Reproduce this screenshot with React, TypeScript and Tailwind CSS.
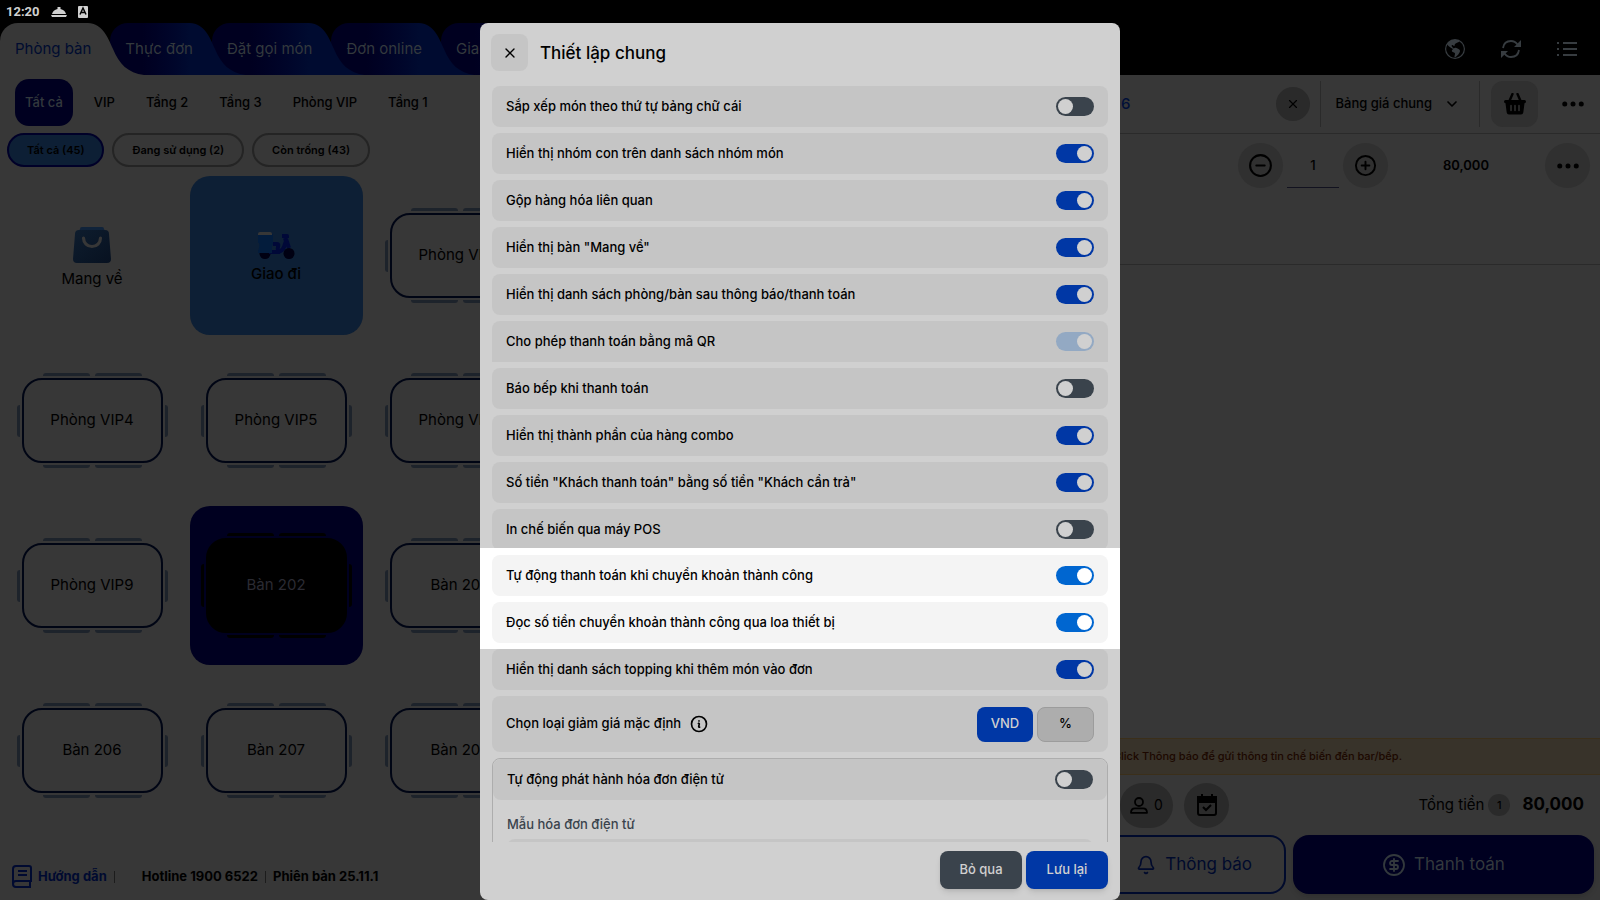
import { BsGlobeAmericas } from "react-icons/bs"
import { HiOutlineInformationCircle } from "react-icons/hi2"
import { Bell, ChevronDown, CircleDollarSign, CircleMinus, CirclePlus, X } from "lucide-react"

const tabs = ["Phòng bàn", "Thực đơn", "Đặt gọi món", "Đơn online", "Giao hàng"]
const areas = ["Tất cả", "VIP", "Tầng 2", "Tầng 3", "Phòng VIP", "Tầng 1"]
const filters = ["Tất cả (45)", "Đang sử dụng (2)", "Còn trống (43)"]

const tables = [
  ["Phòng VIP3"],
  ["Phòng VIP4", "Phòng VIP5", "Phòng VIP6"],
  ["Phòng VIP9", "Bàn 202", "Bàn 203"],
  ["Bàn 206", "Bàn 207", "Bàn 208"],
]

type Setting = { label: string; on: boolean; disabled?: boolean }

const settings: Setting[] = [
  { label: "Sắp xếp món theo thứ tự bảng chữ cái", on: false },
  { label: "Hiển thị nhóm con trên danh sách nhóm món", on: true },
  { label: "Gộp hàng hóa liên quan", on: true },
  { label: 'Hiển thị bàn "Mang về"', on: true },
  { label: "Hiển thị danh sách phòng/bàn sau thông báo/thanh toán", on: true },
  { label: "Cho phép thanh toán bằng mã QR", on: true, disabled: true },
  { label: "Báo bếp khi thanh toán", on: false },
  { label: "Hiển thị thành phần của hàng combo", on: true },
  { label: 'Số tiền "Khách thanh toán" bằng số tiền "Khách cần trả"', on: true },
  { label: "In chế biến qua máy POS", on: false },
]

const highlighted: Setting[] = [
  { label: "Tự động thanh toán khi chuyển khoản thành công", on: true },
  { label: "Đọc số tiền chuyển khoản thành công qua loa thiết bị", on: true },
]

function Toggle({ on, disabled, bright }: { on: boolean; disabled?: boolean; bright?: boolean }) {
  let track = "bg-[#3a434c] checked:bg-[#0037a5]"
  if (disabled) track = "bg-[#93a9c3]"
  if (bright) track = "bg-[#0066d0]"
  return (
    <span className="relative flex shrink-0">
      <input
        type="checkbox"
        defaultChecked={on}
        disabled={disabled}
        className={`peer h-[19px] w-[38px] appearance-none rounded-full ${track}`}
      />
      <span
        className={`pointer-events-none absolute left-[2px] top-[2px] h-[15px] w-[15px] rounded-full peer-checked:left-[21px] ${bright ? "bg-white" : "bg-[#d0d0d0]"}`}
      />
    </span>
  )
}

function SettingRow({ item, bright }: { item: Setting; bright?: boolean }) {
  return (
    <label
      className={`flex h-[41px] items-center justify-between px-[14px] ${item.disabled ? "rounded-t-lg" : "rounded-lg"} ${bright ? "bg-[#f4f4f4]" : "bg-[#c5c5c5]"}`}
    >
      <span>{item.label}</span>
      <Toggle on={item.on} disabled={item.disabled} bright={bright} />
    </label>
  )
}

function Tab({ label, active }: { label: string; active: boolean }) {
  return (
    <button
      className={`relative flex h-[52px] items-center pl-[15px] pr-[19px] ${active ? "text-[#000c30]" : "text-[#33393d]"}`}
    >
      <span
        className={`absolute inset-y-0 left-0 right-[22px] rounded-tl-[18px] ${active ? "bg-[#373737]" : "bg-linear-to-r from-[#000020] from-40% to-[#000b30]"}`}
      />
      <svg
        className={`absolute -right-[34px] top-0 ${active ? "text-[#373737]" : "text-[#000b30]"}`}
        width="56"
        height="52"
        viewBox="0 0 56 52"
        fill="currentColor"
      >
        <path d="M0 0C14 1 19 12 25 26C31 41 40 50 56 52H0Z" />
      </svg>
      <span className="relative whitespace-nowrap">{label}</span>
    </button>
  )
}

function TableCard({ name, selected }: { name: string; selected?: boolean }) {
  const bar = selected ? "bg-black" : "bg-[#1d232b]"
  return (
    <button
      className={`mx-auto flex h-full w-[173px] flex-col items-center justify-center gap-[2px] rounded-[20px] ${selected ? "bg-[#000020] text-[#2b2b33]" : "text-black"}`}
    >
      <span className="flex gap-[5px]">
        <span className={`h-[3px] w-[47px] rounded-t-full ${bar}`} />
        <span className={`h-[3px] w-[47px] rounded-t-full ${bar}`} />
      </span>
      <span className="flex items-center gap-[2px]">
        <span className={`w-[3px] rounded-l-full ${selected ? "h-[43px]" : "h-8"} ${bar}`} />
        <span
          className={`flex w-[141px] items-center justify-center rounded-[20px] border-2 ${selected ? "h-[95px] border-black bg-black" : "h-[85px] border-[#000514]"}`}
        >
          {name}
        </span>
        <span className={`w-[3px] rounded-r-full ${selected ? "h-[43px]" : "h-8"} ${bar}`} />
      </span>
      <span className="flex gap-[5px]">
        <span className={`h-[3px] w-[47px] rounded-b-full ${bar}`} />
        <span className={`h-[3px] w-[47px] rounded-b-full ${bar}`} />
      </span>
    </button>
  )
}

function BagIcon() {
  return (
    <svg width="40" height="38" viewBox="0 0 40 38">
      <defs>
        <linearGradient id="bag" x1="0" y1="0" x2="1" y2="1">
          <stop offset="0" stopColor="#0e1d2e" />
          <stop offset="1" stopColor="#071120" />
        </linearGradient>
      </defs>
      <path d="M10 1h20q2 0 2 2l2 4H6l2-4q0-2 2-2Z" fill="#10233a" />
      <path d="M7 4h26q4 0 4 4l2 25q0 4-4 4H5q-4 0-4-4L3 8q0-4 4-4Z" fill="url(#bag)" />
      <path d="M11.500 12a8.500 8.500 0 0 0 17 0" fill="none" stroke="#373737" strokeWidth="3.200" strokeLinecap="round" />
    </svg>
  )
}

function ScooterIcon() {
  return (
    <svg width="38" height="28" viewBox="0 0 38 28">
      <circle cx="8" cy="22.500" r="5.500" fill="#000012" />
      <path
        d="M16 13h4q2 0 1 3-1 4 2 4 2 0 4-4l2-6-1-3M25 5h5v2M29 8l3 9"
        fill="none"
        stroke="#000838"
        strokeWidth="4"
        strokeLinejoin="round"
      />
      <path d="M12 19h13l-2 4H12Z" fill="#000838" />
      <path d="M1 3h15v9l-1 4v6H1v-2q2-5 1-8H1Z" fill="#031c3c" />
      <path d="M1 3q0-2 2-2h10q2 0 2 2v1H1Z" fill="#373737" />
      <circle cx="32" cy="22.500" r="5.500" fill="#000012" />
    </svg>
  )
}

function BasketIcon() {
  return (
    <svg width="22" height="22" viewBox="0 0 22 22">
      <path d="M5 9 8.500 1M17 9 13.500 1" stroke="currentColor" strokeWidth="2.400" strokeLinecap="round" />
      <path
        d="M1.500 7h19q1.500 0 1.500 1.500T20.500 10.200L19.300 19.500q-.3 2-2.300 2H5q-2 0-2.300-2L1.500 10.200Q0 10 0 8.500T1.500 7Z"
        fill="currentColor"
      />
      <path d="M7 12.500v5M11 12.500v5M15 12.500v5" stroke="#303030" strokeWidth="1.500" strokeLinecap="round" />
    </svg>
  )
}

function Dots() {
  return (
    <svg width="22" height="6" viewBox="0 0 22 6" fill="currentColor">
      <circle cx="2.750" cy="3" r="2.500" />
      <circle cx="11" cy="3" r="2.500" />
      <circle cx="19.250" cy="3" r="2.500" />
    </svg>
  )
}

function TablesPanel() {
  return (
    <section className="flex w-[57.5%] shrink-0 flex-col text-black">
      <nav className="flex items-center gap-[11px] px-[15px] pt-[4px] text-[13px] font-medium">
        {areas.map((area, i) => (
          <button
            key={area}
            className={`h-[47px] whitespace-nowrap rounded-[14px] px-[10px] ${i === 0 ? "bg-[#000020] text-[#33393d]" : ""}`}
          >
            {area}
          </button>
        ))}
      </nav>
      <div className="flex gap-2 px-[7px] pt-[7px] text-[11px] font-semibold">
        {filters.map((filter, i) => (
          <button
            key={filter}
            className={`h-[34px] whitespace-nowrap rounded-full border-2 px-[18px] ${i === 0 ? "border-[#000028] bg-[#0d1f35]" : "border-[#242424]"}`}
          >
            {filter}
          </button>
        ))}
      </div>
      <div className="mt-[9px] grid auto-rows-[159px] grid-cols-5 gap-y-[6px]">
        <button className="mx-auto flex w-[173px] flex-col items-center justify-center gap-1 pt-[6px]">
          <BagIcon />
          Mang về
        </button>
        <button className="mx-auto flex w-[173px] flex-col items-center justify-center gap-1 rounded-[20px] bg-[#0d1f35] pt-[6px] font-medium">
          <ScooterIcon />
          Giao đi
        </button>
        {tables.map((row, r) =>
          row.map((name, i) => (
            <div key={name} className={i === row.length - 1 ? "col-span-3 grid grid-cols-3" : ""}>
              <TableCard name={name} selected={r === 2 && i === 1} />
            </div>
          )),
        )}
      </div>
      <footer className="mt-auto flex h-[47px] items-center px-3 text-[13px] font-bold">
        <a href="#guide" className="flex items-center gap-[6px] text-[#000a30]">
          <svg width="20" height="23" viewBox="0 0 20 23" fill="none" stroke="currentColor" strokeWidth="2">
            <path d="M19 17V3q0-2-2-2H4Q1 1 1 4v15q0 3 3 3h15M1 19q0-3 3-3h15M18 17v5M6 6h9M6 10h9" />
          </svg>
          Hướng dẫn
        </a>
        <span className="ml-[7px] h-3 w-px bg-[#1c1c1c]" />
        <span className="ml-[27px]">Hotline 1900 6522</span>
        <span className="mx-[7px] h-3 w-px bg-[#1c1c1c]" />
        <span>Phiên bản 25.11.1</span>
      </footer>
    </section>
  )
}

function OrderPanel() {
  return (
    <section className="flex min-w-0 flex-1 flex-col text-black">
      <div className="flex h-[59px] items-center border-b border-[#2a2a2a]">
        <span className="flex-1 pl-[201px] text-[15px] font-medium text-[#000f38]">6</span>
        <button aria-label="Xóa" className="mr-[10px] flex h-[34px] w-[34px] items-center justify-center rounded-full bg-[#2a2a2a]">
          <X size={14} />
        </button>
        <button className="flex h-[46px] items-center gap-[12px] border-x border-[#2a2a2a] pl-[15px] pr-[19px] text-[13px] font-medium">
          Bảng giá chung
          <ChevronDown size={16} strokeWidth={2.500} />
        </button>
        <button aria-label="Giỏ hàng" className="ml-[11px] flex h-[46px] w-[47px] items-center justify-center rounded-xl bg-[#303030]">
          <BasketIcon />
        </button>
        <button aria-label="Thêm" className="ml-6 mr-4">
          <Dots />
        </button>
      </div>
      <div className="flex h-[131px] items-start justify-end border-b border-[#2a2a2a] pr-[10px] pt-[9px] text-[13px] font-semibold">
        <button aria-label="Giảm" className="flex h-[45px] w-[45px] items-center justify-center rounded-full bg-[#303030]">
          <CircleMinus size={25} />
        </button>
        <input
          aria-label="Số lượng"
          defaultValue="1"
          className="mx-1 h-[45px] w-[52px] border-b border-[#12121f] text-center font-medium"
        />
        <button aria-label="Tăng" className="flex h-[45px] w-[45px] items-center justify-center rounded-full bg-[#303030]">
          <CirclePlus size={23} />
        </button>
        <span className="w-[157px] pr-[56px] text-right leading-[45px]">80,000</span>
        <button aria-label="Tùy chọn" className="flex h-[45px] w-[45px] items-center justify-center rounded-full bg-[#303030]">
          <Dots />
        </button>
      </div>
      <p className="mt-auto h-[37px] border-y border-[#3b2f1a] bg-[#38332a] pl-[193px] text-[11px] font-medium leading-[35px] text-[#1c0800]">
        Click Thông báo để gửi thông tin chế biến đến bar/bếp.
      </p>
      <div className="flex h-[60px] items-center pl-[200px] pr-[16px]">
        <button className="flex h-[45px] w-[53px] items-center justify-center gap-[6px] rounded-full bg-[#2a2a2a] text-sm">
          <svg width="18" height="17" viewBox="0 0 18 17" fill="none" stroke="currentColor" strokeWidth="1.800">
            <circle cx="9" cy="5" r="4" />
            <path d="M1 15.800q0-4.500 4-4.500h8q4 0 4 4.500Z" strokeLinejoin="round" />
          </svg>
          0
        </button>
        <button aria-label="Đặt bàn" className="ml-[11px] flex h-[45px] w-[45px] items-center justify-center rounded-full bg-[#2a2a2a]">
          <svg width="22" height="24" viewBox="0 0 22 24" fill="none" stroke="currentColor" strokeWidth="2">
            <rect x="2" y="4" width="18" height="18" rx="2" />
            <path d="M2 4h18v5H2z" fill="currentColor" />
            <path d="M6 1v4M16 1v4M7 14l3 3 5-5" />
          </svg>
        </button>
        <span className="ml-auto text-[15px]">Tổng tiền</span>
        <span className="ml-1 flex h-[22px] w-[22px] items-center justify-center rounded-full bg-[#2a2a2a] text-[11px] font-medium">1</span>
        <span className="ml-3 text-[17px] font-bold">80,000</span>
      </div>
      <div className="flex gap-[7px] pb-[6px] pr-[6px] text-[17px]">
        <button className="flex h-[59px] flex-1 items-center justify-end gap-[9px] rounded-2xl border-2 border-[#000a2c] pr-[32px] text-[#000a2c]">
          <Bell size={20} />
          Thông báo
        </button>
        <button className="flex h-[59px] w-[301px] items-center justify-center gap-[8px] rounded-2xl bg-[#000020] text-[#33393d] shadow-md">
          <CircleDollarSign size={24} strokeWidth={1.800} />
          Thanh toán
        </button>
      </div>
    </section>
  )
}

function SettingsDialog() {
  return (
    <div
      role="dialog"
      aria-label="Thiết lập chung"
      className="absolute bottom-0 left-1/2 top-[23px] z-60 flex w-[640px] -translate-x-1/2 flex-col overflow-hidden rounded-lg bg-[#d0d0d0] text-[13px] font-medium text-black"
    >
      <header className="flex items-center gap-3 px-[11px] pb-[15px] pt-[11px]">
        <button aria-label="Đóng" className="flex h-[37px] w-[37px] items-center justify-center rounded-lg bg-[#c5c5c5]">
          <X size={16} />
        </button>
        <h1 className="pt-[2px] text-[17px]">Thiết lập chung</h1>
      </header>
      <div className="flex min-h-0 flex-1 flex-col overflow-hidden px-3 [&>*]:shrink-0">
        <div className="flex flex-col gap-[6px]">
          {settings.map((item) => (
            <SettingRow key={item.label} item={item} />
          ))}
        </div>
        <div className="-mx-3 -mt-[2px] flex flex-col gap-[6px] bg-white px-3 pb-[6px] pt-[7px]">
          {highlighted.map((item) => (
            <SettingRow key={item.label} item={item} bright />
          ))}
        </div>
        <SettingRow item={{ label: "Hiển thị danh sách topping khi thêm món vào đơn", on: true }} />
        <div className="mt-[6px] flex h-[56px] items-center rounded-lg bg-[#c5c5c5] px-[14px]">
          <span>Chọn loại giảm giá mặc định</span>
          <HiOutlineInformationCircle className="ml-2" size={20} strokeWidth={2} />
          <button className="ml-auto h-[35px] w-[56px] rounded-lg bg-[#0037a5] text-[#d0d0d0]">VND</button>
          <button className="ml-1 h-[35px] w-[57px] rounded-lg border border-[#9c9c9c] bg-[#adadad]">%</button>
        </div>
        <div className="mt-[6px] rounded-lg border border-[#adadad]">
          <SettingRow item={{ label: "Tự động phát hành hóa đơn điện tử", on: false }} />
          <div className="px-[14px] pt-[14px]">
            <label htmlFor="invoice" className="block leading-5 text-[#3a434c]">
              Mẫu hóa đơn điện tử
            </label>
            <select id="invoice" className="mt-[5px] h-10 w-full appearance-none rounded-lg bg-[#c5c5c5]" />
          </div>
        </div>
      </div>
      <footer className="flex justify-end gap-1 px-3 pb-[11px] pt-[9px] text-[#d0d0d0]">
        <button className="h-[38px] w-[82px] rounded-lg bg-[#3a434c] shadow-md">Bỏ qua</button>
        <button className="h-[38px] w-[82px] rounded-lg bg-[#0037a5] shadow-md">Lưu lại</button>
      </footer>
    </div>
  )
}

export default function App() {
  return (
    <div className="relative flex h-screen flex-col overflow-hidden bg-[#373737] font-[Inter,sans-serif] text-[15px]">
      <div className="flex h-[23px] items-center gap-[11px] bg-black pl-[6px] font-[Roboto,sans-serif] text-[13px] font-bold text-[#d0d0d0]">
        12:20
        <svg width="16" height="12" viewBox="0 0 16 12" fill="currentColor">
          <path d="M1 8q1-4 5.500-5V1h3v2Q14 4 15 8ZM0 9h16l-1 2H1Z" />
        </svg>
        <svg width="10" height="12" viewBox="0 0 10 12">
          <rect width="10" height="12" rx="1" fill="#d0d0d0" />
          <path d="M2 8.500 5 2l3 6.500M3.500 6.500h3" stroke="#000" strokeWidth="1.500" fill="none" />
        </svg>
      </div>
      <header className="flex h-[52px] shrink-0 items-center justify-between bg-black">
        <nav className="flex flex-row">
          {tabs.map((tab, i) => (
            <div key={tab} className={["z-50", "z-40", "z-30", "z-20", "z-10"][i]}>
              <Tab label={tab} active={i === 0} />
            </div>
          ))}
        </nav>
        <div className="flex items-center gap-[36px] pr-[23px] text-[#373c40]">
          <BsGlobeAmericas size={20} />
          <svg width="20" height="18" viewBox="0 0 20 18" fill="none" stroke="currentColor" strokeWidth="1.800">
            <path d="M2 8q1-7 8-7 4 0 6.500 3.500M18 10q-1 7-8 7-4 0-6.500-3.500" />
            <path d="M20 0v7h-7ZM0 18v-7h7Z" fill="currentColor" stroke="none" />
          </svg>
          <svg width="20" height="16" viewBox="0 0 20 16" stroke="currentColor" strokeWidth="1.800">
            <path d="M0 2h2M6 2h14M0 8h2M6 8h14M0 14h2M6 14h14" />
          </svg>
        </div>
      </header>
      <main className="flex min-h-0 flex-1">
        <TablesPanel />
        <OrderPanel />
      </main>
      <SettingsDialog />
    </div>
  )
}
